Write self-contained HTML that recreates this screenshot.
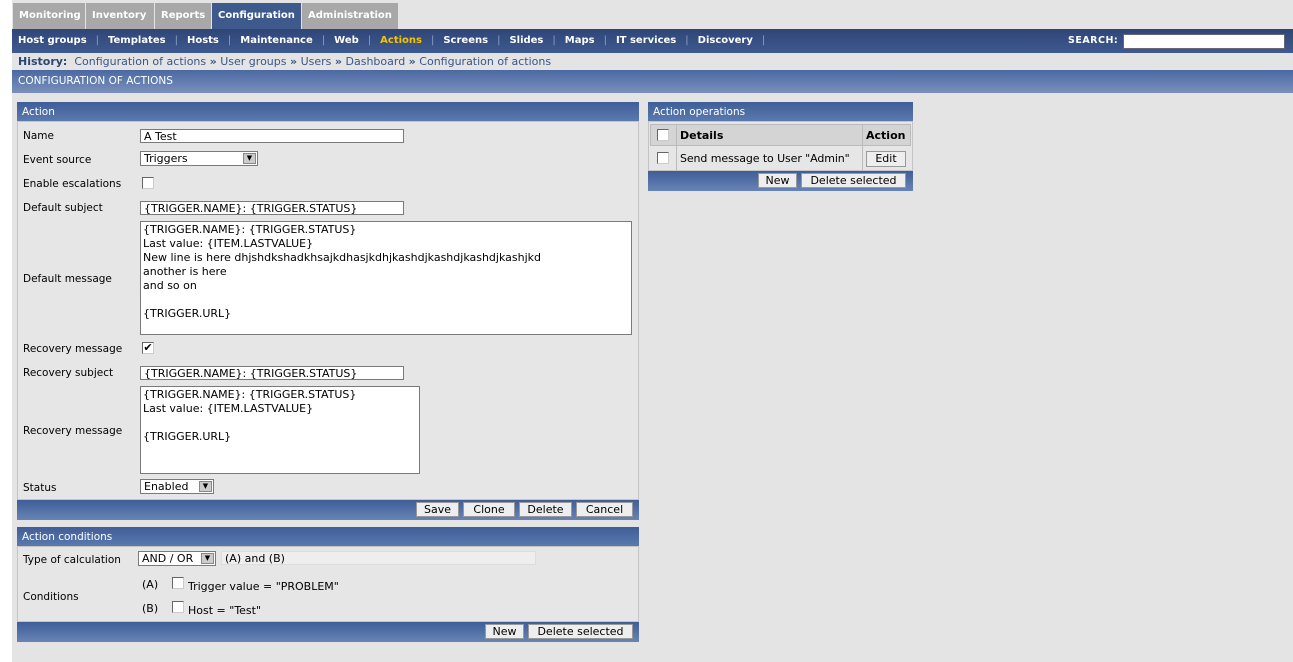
<!DOCTYPE html>
<html><head><meta charset="utf-8"><style>
*{box-sizing:border-box;margin:0;padding:0}
body{width:1293px;height:662px;background:#fff;font-family:"DejaVu Sans",sans-serif;font-size:11px;color:#000;position:relative;overflow:hidden}
.a{position:absolute}
.top{left:12px;top:0;width:1281px;height:29px;background:#e4e4e4}
.tab{position:absolute;top:3px;height:26px;line-height:26px;color:#fff;font-weight:bold;background:#a8a8a8;padding:0 6px;font-size:10px;white-space:nowrap;overflow:hidden}
.nav{left:12px;top:29px;width:1281px;height:24px;background:linear-gradient(#2f4577,#3e5a8f);color:#fff;font-weight:bold;font-size:10px;line-height:24px;padding-left:6px;white-space:nowrap}
.nav span.s{color:#8da0c6;margin:0 9px;font-weight:normal}
.hist{left:12px;top:53px;width:1281px;height:17px;background:#e4e4e4;line-height:17px;padding-left:6px;color:#3b5588;white-space:nowrap}
.title{left:12px;top:70px;width:1281px;height:23px;background:linear-gradient(#4a69a3,#7a90ba);color:#fff;line-height:23px;padding-left:6px;font-size:10.5px}
.bg{left:12px;top:93px;width:1281px;height:569px;background:#e4e4e4}
.ph{background:linear-gradient(#3f5e98,#5a79ad);color:#fff;line-height:20px;padding-left:5px;height:19px;font-size:10.5px}
.pb{background:#e6e6e6;border:1px solid #c4c4c4}
.pf{background:linear-gradient(#3f5e98,#6884b5);height:20px}
.lbl{position:absolute;left:23px;line-height:14px;font-size:10.5px}
.in{position:absolute;background:#fff;border:1px solid #7a7a7a;height:14px;line-height:13px;padding-left:3px;white-space:nowrap}
.ta{position:absolute;background:#fff;border:1px solid #7a7a7a;padding:1px 2px;line-height:14px;white-space:pre}
.cb{position:absolute;width:12px;height:12px;background:#fff;border:1px solid #666;border-right-color:#ccc;border-bottom-color:#ccc}
.btn{position:absolute;height:15px;background:#eee;border:1px solid #999;line-height:14px;text-align:center}
.sel{position:absolute;background:#fff;border:1px solid #7a7a7a;height:15px;line-height:14px;padding-left:3px;white-space:nowrap}
.sel i{position:absolute;right:1px;top:1px;width:13px;height:11px;background:#ccc;border:1px solid #888;font-style:normal;font-size:7px;line-height:9px;text-align:center}
</style></head><body>
<div class="a" style="left:12px;top:0;width:88px;height:2px;background:#d33"></div>
<div class="a top"></div>
<div class="tab" style="left:13px;width:72px">Monitoring</div>
<div class="tab" style="left:86px;width:68px">Inventory</div>
<div class="tab" style="left:155px;width:56px">Reports</div>
<div class="tab" style="left:212px;width:89px;background:#3e5a8c">Configuration</div>
<div class="tab" style="left:302px;width:96px">Administration</div>
<div class="a nav">Host groups<span class="s">|</span>Templates<span class="s">|</span>Hosts<span class="s">|</span>Maintenance<span class="s">|</span>Web<span class="s">|</span><span style="color:#f5c400">Actions</span><span class="s">|</span>Screens<span class="s">|</span>Slides<span class="s">|</span>Maps<span class="s">|</span>IT services<span class="s">|</span>Discovery<span class="s">|</span></div>
<div class="a" style="left:1068px;top:29px;line-height:24px;color:#fff;font-weight:bold;font-size:9.5px;letter-spacing:.5px">SEARCH:</div>
<div class="a" style="left:1123px;top:34px;width:162px;height:15px;background:#fff;border:1px solid #667"></div>
<div class="a hist"><b style="color:#2d4575">History:</b>&nbsp; Configuration of actions <b>»</b> User groups <b>»</b> Users <b>»</b> Dashboard <b>»</b> Configuration of actions</div>
<div class="a title">CONFIGURATION OF ACTIONS</div>
<div class="a bg"></div>

<div class="a ph" style="left:17px;top:102px;width:622px">Action</div>
<div class="a pb" style="left:17px;top:121px;width:622px;height:379px"></div>
<div class="a pf" style="left:17px;top:500px;width:622px"></div>
<div class="lbl" style="top:129px">Name</div>
<div class="in" style="left:140px;top:129px;width:264px">A Test</div>
<div class="lbl" style="top:153px">Event source</div>
<div class="sel" style="left:140px;top:151px;width:118px">Triggers<i>▼</i></div>
<div class="lbl" style="top:177px">Enable escalations</div>
<div class="cb" style="left:142px;top:177px"></div>
<div class="lbl" style="top:201px">Default subject</div>
<div class="in" style="left:140px;top:201px;width:264px">{TRIGGER.NAME}: {TRIGGER.STATUS}</div>
<div class="lbl" style="top:272px">Default message</div>
<div class="ta" style="left:140px;top:221px;width:492px;height:114px">{TRIGGER.NAME}: {TRIGGER.STATUS}
Last value: {ITEM.LASTVALUE}
New line is here dhjshdkshadkhsajkdhasjkdhjkashdjkashdjkashdjkashjkd
another is here
and so on

{TRIGGER.URL}</div>
<div class="lbl" style="top:342px">Recovery message</div>
<div class="cb" style="left:142px;top:342px;font-size:11px;line-height:9px;text-align:center">✔</div>
<div class="lbl" style="top:366px">Recovery subject</div>
<div class="in" style="left:140px;top:366px;width:264px">{TRIGGER.NAME}: {TRIGGER.STATUS}</div>
<div class="lbl" style="top:424px">Recovery message</div>
<div class="ta" style="left:140px;top:386px;width:280px;height:88px">{TRIGGER.NAME}: {TRIGGER.STATUS}
Last value: {ITEM.LASTVALUE}

{TRIGGER.URL}</div>
<div class="lbl" style="top:481px">Status</div>
<div class="sel" style="left:140px;top:479px;width:74px">Enabled<i>▼</i></div>
<div class="btn" style="left:416px;top:502px;width:43px">Save</div>
<div class="btn" style="left:463px;top:502px;width:52px">Clone</div>
<div class="btn" style="left:519px;top:502px;width:53px">Delete</div>
<div class="btn" style="left:576px;top:502px;width:57px">Cancel</div>

<div class="a ph" style="left:17px;top:527px;width:622px">Action conditions</div>
<div class="a pb" style="left:17px;top:546px;width:622px;height:76px"></div>
<div class="a pf" style="left:17px;top:622px;width:622px"></div>
<div class="lbl" style="top:553px">Type of calculation</div>
<div class="sel" style="left:138px;top:551px;width:78px">AND / OR<i>▼</i></div>
<div class="a" style="left:221px;top:551px;width:315px;height:14px;background:#eee;border:1px solid #ddd;line-height:13px;padding-left:3px">(A) and (B)</div>
<div class="lbl" style="top:590px">Conditions</div>
<div class="a" style="left:142px;top:578px">(A)</div>
<div class="cb" style="left:172px;top:577px"></div>
<div class="a" style="left:188px;top:580px">Trigger value = "PROBLEM"</div>
<div class="a" style="left:142px;top:602px">(B)</div>
<div class="cb" style="left:172px;top:601px"></div>
<div class="a" style="left:188px;top:604px">Host = "Test"</div>
<div class="btn" style="left:485px;top:624px;width:39px">New</div>
<div class="btn" style="left:528px;top:624px;width:105px">Delete selected</div>

<div class="a ph" style="left:648px;top:102px;width:265px">Action operations</div>
<div class="a" style="left:648px;top:121px;width:265px;height:50px;background:#e6e6e6;border:1px solid #c4c4c4"></div>
<div class="a" style="left:650px;top:124px;width:261px;height:22px;background:#d4d4d4;border:1px solid #bbb"></div>
<div class="a" style="left:676px;top:124px;width:1px;height:46px;background:#bbb"></div>
<div class="a" style="left:862px;top:124px;width:1px;height:46px;background:#bbb"></div>
<div class="cb" style="left:657px;top:129px"></div>
<div class="a" style="left:680px;top:129px;font-weight:bold;font-size:11px">Details</div>
<div class="a" style="left:866px;top:129px;font-weight:bold;font-size:11px">Action</div>
<div class="cb" style="left:657px;top:152px"></div>
<div class="a" style="left:680px;top:152px;font-size:11px;letter-spacing:-.1px">Send message to User "Admin"</div>
<div class="btn" style="left:866px;top:151px;width:40px;height:16px">Edit</div>
<div class="a pf" style="left:648px;top:171px;width:265px"></div>
<div class="btn" style="left:758px;top:173px;width:39px">New</div>
<div class="btn" style="left:801px;top:173px;width:105px">Delete selected</div>
</body></html>
